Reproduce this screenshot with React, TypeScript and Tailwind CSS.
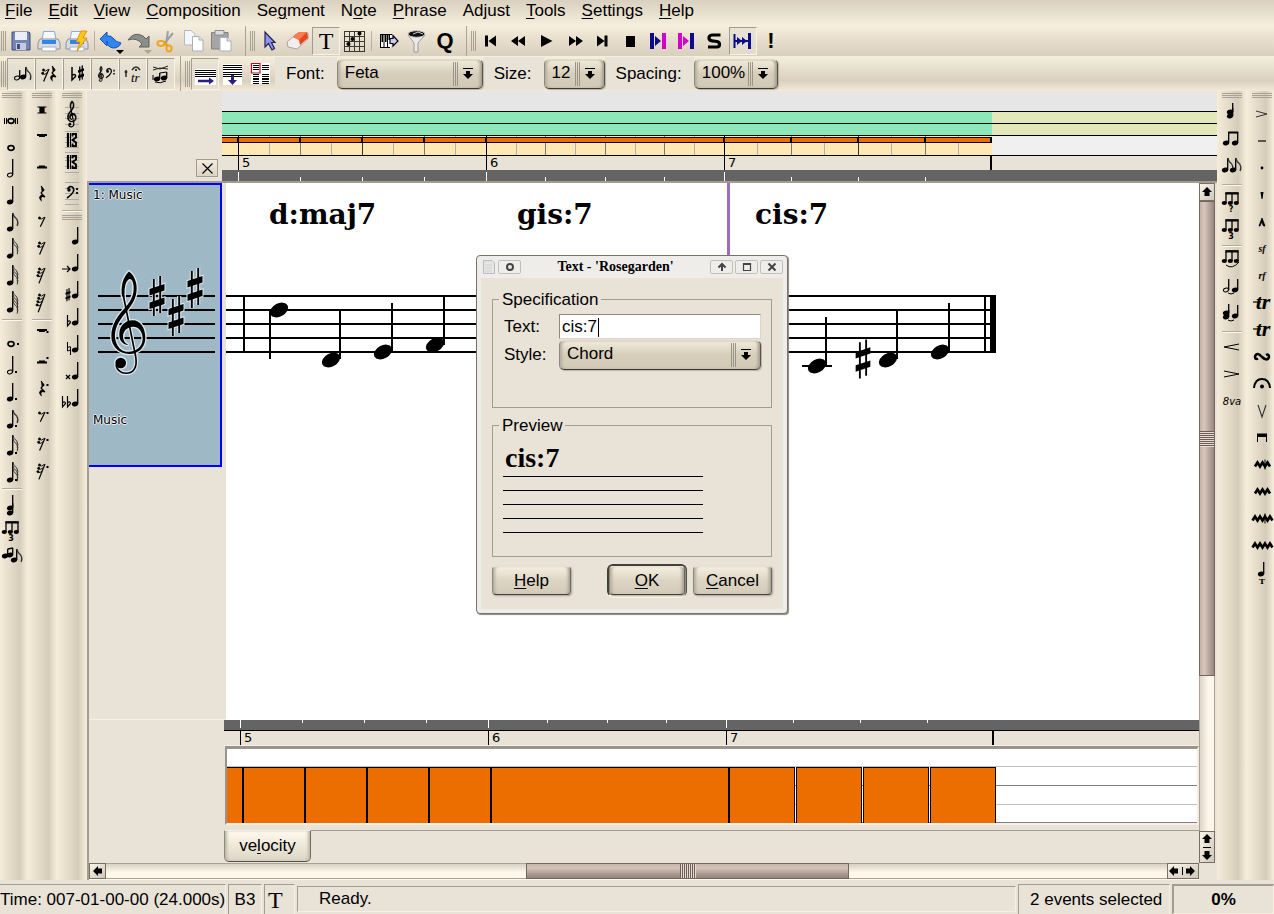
import React from "react";

type Kids = { children?: React.ReactNode };

/* ---------- music glyph primitives ---------- */

const CLEF =
  "M387 545 C408 560 414 590 408 615 C400 650 370 672 355 700 C343 722 342 745 350 762 C358 780 372 788 388 786 C416 784 429 765 428 745 C427 724 415 711 400 711 C382 711 369 724 369 740 C369 752 375 762 386 766 C366 765 357 750 358 732 C359 706 378 692 398 692 C422 692 436 716 436 744 C436 772 416 793 388 793 C356 793 334 770 334 740 C334 705 352 680 372 658 C390 638 402 620 401 592 C400 574 394 566 388 568 C376 574 372 596 374 624 L366 620 C362 590 368 562 387 545Z";
const CLEF_TAIL = "M370 618 L407 800 C413 835 400 851 378 851 C362 851 350 840 348 826";

function Clef({ x, y, s, halo, bold = 0 }: { x: number; y: number; s: number; halo?: boolean; bold?: number }) {
  return (
    <g transform={`translate(${x} ${y}) scale(${s}) translate(-387 -700)`}>
      {halo && (
        <g stroke="#dfe8ec" strokeWidth="8" fill="none">
          <path d={CLEF} />
          <path d={CLEF_TAIL} strokeWidth="12" />
          <circle cx="362" cy="820" r="16" />
        </g>
      )}
      <path d={CLEF} fill="#000" stroke="#000" strokeWidth={bold} />
      <path d={CLEF_TAIL} fill="none" stroke="#000" strokeWidth={5 + bold} />
      <circle cx="362" cy="820" r="16" fill="#000" />
    </g>
  );
}

const SHARP_BARS = "M-7.500 -.5 L7.500 -5.500 V-12 L-7.500 -7 Z M-7.500 13 L7.500 8 V1.500 L-7.500 6.500 Z";

function Sharp({ x, y, s = 1, halo }: { x: number; y: number; s?: number; halo?: boolean }) {
  return (
    <g transform={`translate(${x} ${y}) scale(${s})`}>
      {halo && (
        <g stroke="#dfe8ec" fill="none">
          <path d="M-3.200 -17V20 M3.200 -20V17" strokeWidth="4" />
          <path d={SHARP_BARS} strokeWidth="2" />
        </g>
      )}
      <path d="M-3.200 -17V20 M3.200 -20V17" stroke="#000" strokeWidth="1.900" />
      <path d={SHARP_BARS} fill="#000" />
    </g>
  );
}

function Head({ x, y }: { x: number; y: number }) {
  return <ellipse cx={x} cy={y} rx="9.800" ry="6.600" transform={`rotate(-28 ${x} ${y})`} />;
}

function Note({
  x = 10, y = 21, h = 16, flags = 0, open, dot,
}: { x?: number; y?: number; h?: number; flags?: number; open?: boolean; dot?: boolean }) {
  const sx = x + 2.7;
  return (
    <g>
      <ellipse cx={x} cy={y} rx={open ? 2.6 : 3.2} ry={open ? 1.8 : 2.3} transform={`rotate(-20 ${x} ${y})`} fill={open ? "none" : "#000"} stroke="#000" strokeWidth={open ? 1 : 0} />
      {h > 0 && <path d={`M${sx} ${y}V${y - h}`} stroke="#000" strokeWidth="1.300" />}
      {Array.from({ length: flags }, (_, i) => (
        <path key={i} d={`M${sx} ${y - h + i * 3.2} q1 4 4 6 q2 3 .5 7`} fill="none" stroke="#333" strokeWidth={flags > 1 ? 1 : 1.3} />
      ))}
      {dot && <rect x={x + 5} y={y - 1} width="2" height="2" />}
    </g>
  );
}

function Whole({ x = 11, y = 21, dot, breve }: { x?: number; y?: number; dot?: boolean; breve?: boolean }) {
  return (
    <g stroke="#000" fill="none">
      <ellipse cx={x} cy={y} rx="3" ry="2.300" strokeWidth="1.700" />
      {breve && <path d={`M${x - 6.5} ${y - 3}v6 M${x - 4.5} ${y - 3}v6 M${x + 4.5} ${y - 3}v6 M${x + 6.5} ${y - 3}v6`} />}
      {dot && <rect x={x + 6} y={y - 1} width="2" height="2" fill="#000" stroke="none" />}
    </g>
  );
}

function Triplet({ x = 0, y = 0, mark }: { x?: number; y?: number; mark?: string }) {
  return (
    <g transform={`translate(${x} ${y})`}>
      <path d="M6 13V3H18V13 M12 13V3" fill="none" stroke="#000" strokeWidth="1.300" />
      <path d="M5.500 3.500H18.500" stroke="#000" strokeWidth="2" />
      <ellipse cx="4.300" cy="13" rx="2.600" ry="2" />
      <ellipse cx="10.300" cy="13" rx="2.600" ry="2" />
      <ellipse cx="16.300" cy="13" rx="2.600" ry="2" />
      {mark && (
        <text x="11" y="21.500" textAnchor="middle" className="font-['DejaVu_Sans'] text-[8px] font-bold">
          {mark}
        </text>
      )}
    </g>
  );
}

function Rest({ n, y = 13, dot }: { n: number; y?: number; dot?: boolean }) {
  // n: -3 breve, -2 whole, -1 half, 0 quarter, 1.. eighth and shorter
  return (
    <g transform={`translate(14 ${y})`} stroke="#000" fill="none" strokeWidth="1.200">
      {n === -3 && <path d="M-4.500 -3H4.500 M-4.500 3H4.500 M-2 -3H2V3H-2Z" fill="#000" />}
      {n === -2 && <path d="M-5 -1H5 M-3 0H3" strokeWidth="1.800" />}
      {n === -1 && <path d="M-5 1.500H5 M-3 .3H3" strokeWidth="1.800" />}
      {n === 0 && <path d="M-1 -7L2 -3L-1 0L3 4Q-2 2 -1 7Q-4 4 0 2" fill="#000" strokeWidth="1.100" />}
      {n > 0 && (
        <>
          <path d={`M3 ${-3 - n}L${-1 - n * 0.7} ${4 + n * 1.8}`} />
          {Array.from({ length: n }, (_, i) => (
            <g key={i}>
              <circle cx={-2.500 - i * 0.8} cy={-2 - n + i * 3.300} r="1.200" fill="#000" strokeWidth=".4" />
              <path d={`M${-2.500 - i * 0.8} ${-1.500 - n + i * 3.300}q2 1.500 ${4.500 - i * 0.2} -1`} strokeWidth=".9" />
            </g>
          ))}
        </>
      )}
      {dot && <rect x="4.500" y={n === -2 ? 0 : -4} width="2" height="2" fill="#000" stroke="none" />}
    </g>
  );
}

function StaffBits({ ys }: { ys: number[] }) {
  return (
    <g stroke="#a9abad">
      {ys.map((y) => (
        <path key={y} d={`M7 ${y + 0.5}H21`} />
      ))}
    </g>
  );
}

function CClef({ y }: { y: number }) {
  return (
    <g transform={`translate(9 ${y})`} stroke="#000" fill="none">
      <path d="M1 -7V7" strokeWidth="2.200" />
      <path d="M3.500 -7V7" strokeWidth="1" />
      <path d="M5.500 -3.500V-6H9V-2.500L5.500 0L9 2.500V6H5.500V3.500" strokeWidth="1.900" />
    </g>
  );
}

function FClef({ x = 14, y = 13, s = 1 }: { x?: number; y?: number; s?: number }) {
  return (
    <g transform={`translate(${x} ${y}) scale(${s})`} fill="none" stroke="#000">
      <circle cx="-3" cy="-2" r="1.700" fill="#000" stroke="none" />
      <path d="M-4.500 -3Q-2 -7 1 -4.500Q4 0 -5 6" strokeWidth="1.600" />
      <path d="M5 -4v2M5 0v2" strokeWidth="1.800" />
    </g>
  );
}

const Mordent = ({ n, bar }: { n: number; bar?: boolean }) => (
  <g transform="translate(14.500 13.500)" stroke="#000" fill="none">
    <path
      d={Array.from({ length: n + 1 }, (_, i) => `${i ? "l" : `M${-(n + 1) * 2.5} 2l`}2.500 -4l2.500 4`).join("")}
      strokeWidth="2.600"
    />
    {bar && <path d="M2.500 -5V5" strokeWidth="1" />}
  </g>
);

/* ---------- shared pieces ---------- */

function ToolBtn({ label, children, down }: { label: string; down?: boolean } & Kids) {
  return (
    <button
      type="button"
      aria-label={label}
      title={label}
      className={
        down
          ? "flex h-7 w-7 items-center justify-center border border-t-[#a39c90] border-l-[#a39c90] border-r-[#fbf4e4] border-b-[#fbf4e4] bg-[#e6dfd3]/70"
          : "flex h-7 w-7 items-center justify-center"
      }
    >
      {children}
    </button>
  );
}

function Svg({ children, className = "" }: Kids & { className?: string }) {
  return (
    <svg width="26" height="26" viewBox="0 0 26 26" aria-hidden="true" className={"shrink-0 overflow-visible " + className}>
      {children}
    </svg>
  );
}

function Handle() {
  return (
    <span className="flex h-5 w-[7px] shrink-0 gap-px pl-px">
      <i className="w-px bg-[#a9a294]" />
      <i className="w-px bg-[#a9a294]" />
      <i className="w-px bg-[#a9a294]" />
    </span>
  );
}

function VHandle({ className = "mx-1" }: { className?: string }) {
  return (
    <span className={"flex h-[9px] w-5 shrink-0 flex-col gap-px pt-[2px] " + className}>
      <i className="h-px bg-[#a9a294]" />
      <i className="h-px bg-[#a9a294]" />
      <i className="h-px bg-[#a9a294]" />
    </span>
  );
}

const Split = () => <span className="mr-[3px] ml-[7px] h-full w-px bg-[#aaa396]" />;
const Sep = () => <span className="mx-[3px] h-5 w-px bg-[#b9b2a4]" />;

function VSep({ tall, left }: { tall?: boolean; left?: boolean }) {
  return (
    <span className={tall ? "flex h-2 w-7 shrink-0 flex-col justify-center" : "flex h-[5px] w-7 shrink-0 flex-col justify-center"}>
      <i className={left ? "ml-[2px] h-px w-5 bg-[#b3ac9f]" : "mx-1 h-px bg-[#b3ac9f]"} />
      <i className={left ? "ml-[2px] h-px w-5 bg-[#fdf7e9]" : "mx-1 h-px bg-[#fdf7e9]"} />
    </span>
  );
}

function Cell({ label, children }: { label: string } & Kids) {
  return (
    <button type="button" aria-label={label} title={label} className="block h-[27px] shrink-0">
      <svg width="28" height="27" viewBox="0 0 28 27" aria-hidden="true" className="block overflow-visible">
        {children}
      </svg>
    </button>
  );
}

const DownMark = () => (
  <svg width="10" height="12" viewBox="0 0 10 12" aria-hidden="true">
    <path d="M0 .5H10" stroke="#000" />
    <path d="M3 3H7V6H10L5 11L0 6H3Z" fill="#000" />
  </svg>
);

function Combo({ id, value, width, options }: { id: string; value: string; width: string; options: string[] }) {
  return (
    <span className={"relative block h-[30px] " + width}>
      <select
        id={id}
        defaultValue={value}
        className="block h-[30px] w-full appearance-none rounded-[5px] border border-t-[#e2dac8] border-r-[#55524a] border-b-[#3d3b35] border-l-[#8e887b] bg-linear-to-b from-[#f3ecdc] via-[#d6cdba] to-[#d2cab7] pb-[2px] pl-[7px] text-[17px] leading-6 shadow-[inset_3px_0_3px_-1px_#b5ad9d,inset_-3px_0_3px_-1px_#a39c8d,1px_1px_1px_#b9b2a5] outline-none"
      >
        {options.map((o) => (
          <option key={o}>{o}</option>
        ))}
      </select>
      <span className="pointer-events-none absolute inset-y-0 right-[10px] flex items-center gap-[5px]">
        <span className="flex h-6 gap-px">
          <i className="w-px bg-[#9c9587]" />
          <i className="w-px bg-[#9c9587]" />
          <i className="w-px bg-[#9c9587]" />
        </span>
        <DownMark />
      </span>
    </span>
  );
}

function PushButton({ children, width }: { width: string } & Kids) {
  return (
    <button
      type="button"
      className={
        "h-[29px] rounded-[4px] border border-t-[#e9e2d2] border-r-[#6e6a60] border-b-[#45433d] border-l-[#8f897c] bg-linear-to-b from-[#f5eedf] via-[#ddd5c4] to-[#d3cab7] text-[17px] leading-6 shadow-[inset_4px_0_3px_-2px_#b5ad9d,inset_-4px_0_3px_-2px_#a8a192,1px_1px_2px_#a8a295] " +
        width
      }
    >
      {children}
    </button>
  );
}

const U = ({ children }: Kids) => <span className="underline decoration-1 underline-offset-2">{children}</span>;

/* ---------- menu and toolbars ---------- */

const MENU: [string, string, string][] = [
  ["", "F", "ile"], ["", "E", "dit"], ["", "V", "iew"], ["", "C", "omposition"], ["Se", "g", "ment"],
  ["N", "o", "te"], ["", "P", "hrase"], ["Ad", "j", "ust"], ["", "T", "ools"], ["", "S", "ettings"], ["", "H", "elp"],
];

function MenuBar() {
  return (
    <nav className="flex h-[26px] gap-4 bg-linear-to-b from-[#d9d0bf] to-[#f7efdd] pl-[5px] text-[17px] leading-[22px]">
      {MENU.map(([a, b, c]) => (
        <button key={a + b + c} type="button" className="h-[22px]">
          {a}
          <U>{b}</U>
          {c}
        </button>
      ))}
    </nav>
  );
}

const Printer = () => (
  <g>
    <path d="M7.500 3.500H18.500L20 12H6Z" fill="#f4f8ff" stroke="#8fa9d8" />
    <path d="M4 11H22L24 15V21H2V15Z" fill="#d8dce2" stroke="#8a929c" />
    <path d="M6 12H20V16H6Z" fill="#2f86e8" />
    <path d="M6 19H20V23H6Z" fill="#fff" stroke="#a9b1ba" />
  </g>
);

function MainToolbar() {
  return (
    <div className="flex h-[30px] items-center bg-linear-to-b from-[#f6eedb] via-[#e9e0cf] via-40% to-[#d8cfbe]">
      <Handle />
      <ToolBtn label="Save">
        <Svg>
          <path d="M4 4H21L22 5V22H4Z" fill="#7486b4" stroke="#3f4f7e" />
          <path d="M7 4H19V12H7Z" fill="#e9eef8" />
          <path d="M8 15H18V22H8Z" fill="#c4cbe0" />
          <path d="M9 16H12V21H9Z" fill="#3f4f7e" />
        </Svg>
      </ToolBtn>
      <ToolBtn label="Print"><Svg><Printer /></Svg></ToolBtn>
      <ToolBtn label="Print preview">
        <Svg>
          <Printer />
          <path d="M17 3L12 14H16L13 23L23 10H19L23 3Z" fill="#ffc61a" stroke="#d48a00" strokeWidth=".8" />
        </Svg>
      </ToolBtn>
      <Sep />
      <ToolBtn label="Undo">
        <Svg>
          <path d="M1 11L8 4V8Q12 7 15 11Q17 14 22 15Q20 20 14 20Q8 19 8 13V18Z" fill="#2f86f0" stroke="#1c4fb0" />
          <path d="M17 22H25L21 26Z" fill="#000" />
        </Svg>
      </ToolBtn>
      <ToolBtn label="Redo">
        <Svg>
          <path d="M1 12Q7 3 16 8L19 11L22 8V19H12L15 16Q10 9 1 12Z" fill="#8b8f8c" stroke="#5d615e" />
          <path d="M17 22H25L21 26Z" fill="#aaa396" />
        </Svg>
      </ToolBtn>
      <ToolBtn label="Cut">
        <Svg>
          <path d="M13 3L11 16M18 5L9 16" stroke="#9aa0a8" strokeWidth="2" />
          <path d="M9 15L13 18" stroke="#e59a10" strokeWidth="2.500" />
          <ellipse cx="6" cy="15.500" rx="3.600" ry="2.400" fill="none" stroke="#f0a61c" strokeWidth="2" />
          <ellipse cx="14" cy="20.500" rx="2.600" ry="3" fill="none" stroke="#f0a61c" strokeWidth="2" />
        </Svg>
      </ToolBtn>
      <ToolBtn label="Copy">
        <Svg>
          <path d="M1.500 2.500H8L12 6V17H1.500Z" fill="#f5f7fb" stroke="#b3b9c6" />
          <path d="M9.500 8.500H16L20 12V23H9.500Z" fill="#fff" stroke="#a7aebd" />
          <path d="M16 8.500V12H20" fill="#dfe4ee" stroke="#a7aebd" />
        </Svg>
      </ToolBtn>
      <ToolBtn label="Paste">
        <Svg>
          <path d="M.5 4.500H17V21H.5Z" fill="#a4a7a6" stroke="#7f8281" />
          <path d="M4 2.500H13V7H4Z" fill="#dcdedd" stroke="#8b8e8d" />
          <path d="M9 9.500H16L20 13V23H9Z" fill="#fff" stroke="#a7aebd" />
          <path d="M16 9.500V13H20" fill="#dfe4ee" stroke="#a7aebd" />
        </Svg>
      </ToolBtn>
      <Split />
      <Handle />
      <ToolBtn label="Select">
        <Svg><path d="M8 4V19L11.500 15.500L15 22L17.500 20.500L14.500 14.500H18Z" fill="#8f93ea" stroke="#22225a" strokeWidth="1.200" /></Svg>
      </ToolBtn>
      <ToolBtn label="Erase">
        <Svg>
          <path d="M2 14L11 6L23 5L23 11L12 21L3 19Z" fill="#f3eeee" stroke="#9b9392" strokeWidth=".8" />
          <path d="M8 9L14 4H22L23 10L15 17L14 12Z" fill="#e8451a" />
          <path d="M8 9L14 4H22L14 12Z" fill="#ff7c50" />
        </Svg>
      </ToolBtn>
      <ToolBtn label="Text" down><span className="font-['Liberation_Serif'] text-[24px] leading-6">T</span></ToolBtn>
      <ToolBtn label="Guitar chord">
        <Svg>
          <path d="M3.500 3V24M8.500 3V24M13.500 3V24M18.500 3V24M23.500 3V24M3 3.500H24M3 8.500H24M3 13.500H24M3 18.500H24M3 23.500H24" stroke="#3a3832" />
          <circle cx="18.500" cy="5.500" r="2" /><circle cx="11.500" cy="11" r="2" /><circle cx="7.500" cy="16" r="2" />
        </Svg>
      </ToolBtn>
      <Sep />
      <ToolBtn label="Step recording">
        <Svg>
          <path d="M4 6H15V20H4Z" fill="#fff" />
          <path d="M4.500 6V20M8 6V20M11.500 6V20M4 6.500H16M4 19.500H14" stroke="#000" />
          <path d="M5.500 6h1.500v8h-1.500zM9 6h1.500v8h-1.500zM12.500 6h1.500v6h-1.500z" />
          <path d="M14 10.500H17V7.500L22 13L17 18V15.500H14Z" fill="#c9caf5" stroke="#000" strokeWidth="1.200" />
        </Svg>
      </ToolBtn>
      <ToolBtn label="Filter">
        <Svg>
          <path d="M4 7L10 15V24H14V15L21 7Z" fill="#e9e9e7" stroke="#8a8a88" strokeWidth=".8" />
          <ellipse cx="12.500" cy="6" rx="8.500" ry="3.300" fill="#111" stroke="#ccc" />
          <path d="M9 6L14 4L19 6" stroke="#fff" strokeWidth=".8" fill="none" />
        </Svg>
      </ToolBtn>
      <ToolBtn label="Quantize"><span className="text-[22px] leading-6 font-bold">Q</span></ToolBtn>
      <Split />
      <Handle />
      <ToolBtn label="Rewind to start"><Svg><path d="M7 7.500H10V18.500H7ZM18 7.500V18.500L10.500 13Z" /></Svg></ToolBtn>
      <ToolBtn label="Rewind"><Svg><path d="M12 8V18L5 13ZM19 8V18L12 13Z" /></Svg></ToolBtn>
      <ToolBtn label="Play"><Svg><path d="M7 7V19L18.500 13Z" /></Svg></ToolBtn>
      <ToolBtn label="Fast forward"><Svg><path d="M7 8V18L14 13ZM14 8V18L21 13Z" /></Svg></ToolBtn>
      <ToolBtn label="Forward to end"><Svg><path d="M7 7.500V18.500L14.500 13ZM14.500 7.500H17.500V18.500H14.500Z" /></Svg></ToolBtn>
      <ToolBtn label="Stop"><Svg><path d="M8 8H17V19H8Z" /></Svg></ToolBtn>
      <ToolBtn label="Playback pointer to start">
        <Svg>
          <path d="M4 5H8V21H4ZM9 8V18L15 13Z" fill="#0b0b8c" />
          <path d="M16 5H20V21H16Z" fill="#d400c8" />
        </Svg>
      </ToolBtn>
      <ToolBtn label="Playback pointer to end">
        <Svg>
          <path d="M4 5H8V21H4ZM9 8V18L15 13Z" fill="#d400c8" />
          <path d="M16 5H20V21H16Z" fill="#0b0b8c" />
        </Svg>
      </ToolBtn>
      <ToolBtn label="Solo">
        <Svg><path d="M18.500 7H11Q7 7 7 10Q7 12.500 10 12.800L15 13.500Q17.500 14 17.500 16.500Q17.500 19 15 19H6" fill="none" stroke="#000" strokeWidth="3.200" /></Svg>
      </ToolBtn>
      <ToolBtn label="Scroll to follow playback" down>
        <Svg>
          <path d="M4.500 6V20M4 13H18" stroke="#0b0b8c" strokeWidth="2" />
          <path d="M7 9L12 13L7 17ZM12 9L17 13L12 17Z" fill="#0b0b8c" />
          <path d="M18 5H21V21H18Z" fill="#0b0b8c" />
        </Svg>
      </ToolBtn>
      <ToolBtn label="Panic"><span className="text-[22px] leading-6 font-bold">!</span></ToolBtn>
    </div>
  );
}

function Field({ id, label, children }: { id: string; label: string } & Kids) {
  return (
    <span className="flex h-[33px] items-center">
      <label htmlFor={id} className="flex h-[33px] items-center bg-[#e8e2d7] pr-3 pl-[11px] text-[17px] leading-6">
        {label}
      </label>
      {children}
    </span>
  );
}

const MiniStaff = ({ y = 0, x = 0, w = 22 }: { y?: number; x?: number; w?: number }) => (
  <g stroke="#000">
    {[0, 2, 4].map((d) => (
      <path key={d} d={`M${x} ${y + d + 0.5}h${w}`} />
    ))}
  </g>
);

function NoteToolbar() {
  const tall = "flex h-8 items-center [&>button]:h-8";
  return (
    <div className="flex h-[35px] items-center bg-linear-to-b from-[#f7efdd] via-[#d9d0bf] via-70% to-[#f3ead7]">
      <span className="flex h-8 py-[3px] [&>span]:h-full">
        <Handle />
      </span>
      <div className={tall}>
        <ToolBtn label="Notes" down><Svg><Note x={9} y={17} h={8} open /><Note x={15} y={16} h={10} flags={1} /></Svg></ToolBtn>
        <ToolBtn label="Rests" down><Svg><g transform="translate(-4 0)"><Rest n={2} /></g><g transform="translate(3 -1)"><Rest n={0} /></g></Svg></ToolBtn>
        <ToolBtn label="Accidentals" down>
          <Svg>
            <path d="M8 6V19L11.500 15.500Q12 12.500 8 14" fill="none" stroke="#000" strokeWidth="1.500" />
            <Sharp x={17} y={12} s={0.4} /><path d="M15.800 6V19M18.200 5V18" stroke="#000" />
          </Svg>
        </ToolBtn>
        <ToolBtn label="Clefs" down>
          <Svg>
            <Clef x={9} y={13} s={0.05} bold={12} />
            <FClef x={18} y={12} s={0.8} />
          </Svg>
        </ToolBtn>
        <ToolBtn label="Marks" down>
          <Svg>
            <path d="M6 9V16M4.500 11H7.500" stroke="#000" strokeWidth="1.200" />
            <path d="M12 9Q16 3 20 9" fill="none" stroke="#333" strokeWidth="1.500" />
            <circle cx="16" cy="9" r="1" />
            <text x="11" y="21" className="font-['Liberation_Serif'] text-[13px] italic">tr</text>
          </Svg>
        </ToolBtn>
        <ToolBtn label="Group" down>
          <Svg>
            <path d="M5 6L12 8L20 5M5 9L12 7L20 8" fill="none" stroke="#222" />
            <Note x={9} y={18} h={6} /><Note x={16} y={17} h={6} />
            <path d="M11.700 12L18.700 11M7 21Q12 23 18 20M5 14V19" fill="none" stroke="#000" />
          </Svg>
        </ToolBtn>
      </div>
      <span className="flex h-[35px] pl-[5px]"><i className="mr-[3px] w-px bg-[#aaa396]" /></span>
      <span className="flex h-8 py-[3px] [&>span]:h-full"><Handle /></span>
      <div className={tall}>
        <ToolBtn label="Linear layout" down>
          <Svg>
            <path d="M3 8H24V24H3Z" fill="#fff" />
            <MiniStaff y={9} x={3} w={21} /><path d="M3 15.500H24" stroke="#000" />
            <path d="M6 20H18" stroke="#2a2080" strokeWidth="2.500" />
            <path d="M17 16.500L22 20L17 23.500Z" fill="#2a2080" />
          </Svg>
        </ToolBtn>
        <ToolBtn label="Page layout">
          <Svg>
            <path d="M3 3H22V24H3Z" fill="#fff" />
            <MiniStaff y={4} x={3} w={19} /><MiniStaff y={11} x={3} w={19} />
            <path d="M12.500 14V20" stroke="#2a2080" strokeWidth="3" />
            <path d="M8 19H17L12.500 24Z" fill="#2a2080" />
          </Svg>
        </ToolBtn>
        <ToolBtn label="Multi page layout">
          <Svg>
            <path d="M3 2H22V23H3Z" fill="#fff" />
            <MiniStaff y={4} x={5} w={6} /><MiniStaff y={4} x={14} w={7} />
            <MiniStaff y={13} x={5} w={6} /><MiniStaff y={13} x={14} w={7} />
            <MiniStaff y={18} x={5} w={6} /><MiniStaff y={18} x={14} w={7} />
            <path d="M3.500 2.500H12V12H3.500Z" fill="none" stroke="#b01020" strokeWidth="1.200" />
          </Svg>
        </ToolBtn>
      </div>
      <Field id="font" label="Font:"><Combo id="font" value="Feta" width="w-[146px]" options={["Feta"]} /></Field>
      <Field id="size" label="Size:"><Combo id="size" value="12" width="w-[61px]" options={["12"]} /></Field>
      <Field id="spacing" label="Spacing:"><Combo id="spacing" value="100%" width="w-[84px]" options={["100%"]} /></Field>
    </div>
  );
}

/* ---------- side palettes ---------- */

const col = "flex flex-col items-start bg-linear-to-r from-[#f5edd9] via-[#d5ccba] via-70% to-[#f7efdc]";

function LeftTools() {
  return (
    <aside className="flex shrink-0">
      <div className={col + " w-7"}>
        <VHandle className="ml-[2px]" />
        <Cell label="Breve"><Whole breve /></Cell>
        <Cell label="Whole"><Whole /></Cell>
        <Cell label="Half"><Note open /></Cell>
        <Cell label="Quarter"><Note /></Cell>
        <Cell label="Eighth"><Note flags={1} /></Cell>
        <Cell label="Sixteenth"><Note h={18} flags={2} /></Cell>
        <Cell label="Thirty-second"><Note h={18} flags={3} /></Cell>
        <Cell label="Sixty-fourth"><Note h={19} flags={4} /></Cell>
        <VSep tall left />
        <Cell label="Dotted whole"><Whole y={20} dot /></Cell>
        <Cell label="Dotted half"><Note open dot /></Cell>
        <Cell label="Dotted quarter"><Note dot /></Cell>
        <Cell label="Dotted eighth"><Note flags={1} dot /></Cell>
        <Cell label="Dotted sixteenth"><Note h={18} flags={2} dot /></Cell>
        <Cell label="Dotted thirty-second"><Note h={18} flags={3} dot /></Cell>
        <VSep left />
        <Cell label="Chord mode"><Note y={22} h={18} /><Note y={17} h={5} /></Cell>
        <Cell label="Triplet mode"><Triplet y={1} mark="3" /></Cell>
        <Cell label="Grace mode">
          <Note x={5} y={11} h={7} /><Note x={10} y={10} h={7} /><path d="M7.700 4L13 3" stroke="#000" strokeWidth="1.500" /><Note x={14} y={15} h={11} flags={1} />
        </Cell>
      </div>
      <div className={col + " w-[29px]"}>
        <VHandle />
        <Cell label="Breve rest"><Rest n={-3} y={10} /></Cell>
        <Cell label="Whole rest"><Rest n={-2} y={9} /></Cell>
        <Cell label="Half rest"><Rest n={-1} y={12} /></Cell>
        <Cell label="Quarter rest"><Rest n={0} y={12} /></Cell>
        <Cell label="Eighth rest"><Rest n={1} /></Cell>
        <Cell label="Sixteenth rest"><Rest n={2} y={12} /></Cell>
        <Cell label="Thirty-second rest"><Rest n={3} y={12} /></Cell>
        <Cell label="Sixty-fourth rest"><Rest n={4} y={12} /></Cell>
        <VSep tall />
        <Cell label="Dotted whole rest"><Rest n={-2} y={7} dot /></Cell>
        <Cell label="Dotted half rest"><Rest n={-1} y={10} dot /></Cell>
        <Cell label="Dotted quarter rest"><Rest n={0} y={10} dot /></Cell>
        <Cell label="Dotted eighth rest"><Rest n={1} y={11} dot /></Cell>
        <Cell label="Dotted sixteenth rest"><Rest n={2} y={11} dot /></Cell>
        <Cell label="Dotted thirty-second rest"><Rest n={3} y={11} dot /></Cell>
      </div>
      <div className={col + " w-[30px] pl-px"}>
        <VHandle />
        <Cell label="Treble clef"><StaffBits ys={[7, 13, 18, 24]} /><Clef x={14} y={14} s={0.085} bold={9} /></Cell>
        <Cell label="Alto clef"><StaffBits ys={[4, 10, 15, 20, 25]} /><CClef y={13} /></Cell>
        <Cell label="Tenor clef"><StaffBits ys={[3, 6, 12, 18]} /><CClef y={8} /></Cell>
        <Cell label="Bass clef"><StaffBits ys={[1, 7, 12, 18, 23]} /><FClef y={11} /></Cell>
        <VSep />
        <VHandle />
        <Cell label="No accidental"><Note x={17} y={20} h={15} /></Cell>
        <Cell label="Follow accidental"><Note x={17} y={20} h={15} /><path d="M4 20H12M9 17L12 20L9 23" fill="none" stroke="#000" strokeWidth="1.200" /></Cell>
        <Cell label="Sharp"><Note x={17} y={20} h={15} /><Sharp x={10} y={19} s={0.33} /><path d="M9 13V25M11 12V24" stroke="#000" strokeWidth=".8" /></Cell>
        <Cell label="Flat"><Note x={17} y={20} h={15} /><path d="M9.500 12V23L12.500 19.500Q12.500 17 9.500 18.500" fill="none" stroke="#000" strokeWidth="1.200" /></Cell>
        <Cell label="Natural"><Note x={17} y={20} h={15} /><path d="M9.500 12V21L12.500 20V25M12.500 17V25M9.500 17.500L12.500 16.500" fill="none" stroke="#000" /></Cell>
        <Cell label="Double sharp"><Note x={17} y={20} h={15} /><path d="M8 18L12 22M12 18L8 22" stroke="#000" strokeWidth="1.300" /></Cell>
        <Cell label="Double flat"><Note x={17} y={20} h={15} /><path d="M4.500 12V23L7.500 19.500Q7.500 17 4.500 18.500M9.500 12V23L12.500 19.500Q12.500 17 9.500 18.500" fill="none" stroke="#000" strokeWidth="1.200" /></Cell>
      </div>
    </aside>
  );
}

function Trill() {
  return (
    <g>
      <text x="15" y="20" textAnchor="middle" className="font-['Liberation_Serif'] text-[22px] font-bold italic">tr</text>
      <path d="M5 13H13" stroke="#000" strokeWidth="1.200" />
    </g>
  );
}

function RightTools() {
  return (
    <aside className="flex shrink-0">
      <div className={col + " w-[30px] pl-px"}>
        <VHandle />
        <Cell label="Chord"><Note x={12} y={16} h={13} /><Note x={12} y={12} h={4} /></Cell>
        <Cell label="Beam"><Note x={8} y={16} h={11} /><Note x={17} y={16} h={11} /><path d="M10.200 5.500H20.200" stroke="#000" strokeWidth="2" /></Cell>
        <Cell label="Auto beam"><Note x={7} y={16} h={12} flags={1} /><Note x={15} y={16} h={12} flags={1} /></Cell>
        <VSep tall />
        <Cell label="Tuplet"><Triplet x={2} y={1} mark="?" /></Cell>
        <Cell label="Triplet"><Triplet x={2} y={1} mark="3" /></Cell>
        <VSep />
        <Cell label="Slur"><Triplet x={2} /><path d="M8 17Q14 22 21 14" fill="none" stroke="#000" /></Cell>
        <Cell label="Tie"><Note x={8} y={15} h={11} open /><Note x={17} y={15} h={11} /><path d="M10 18Q13 20 16 18" fill="none" stroke="#000" /></Cell>
        <Cell label="Tie chord"><Note x={8} y={15} h={13} /><Note x={8} y={11} h={3} /><Note x={17} y={14} h={11} /><path d="M10 18Q13 20 16 18" fill="none" stroke="#000" /></Cell>
        <VSep />
        <Cell label="Crescendo"><path d="M21 10L6 13L21 16" fill="none" stroke="#000" /></Cell>
        <Cell label="Decrescendo"><path d="M6 10L21 13L6 16" fill="none" stroke="#000" /></Cell>
        <Cell label="Octave up"><text x="14" y="17" textAnchor="middle" className="font-['DejaVu_Sans'] text-[10px] italic">8va</text></Cell>
      </div>
      <div className={col + " w-[27px] pl-px"}>
        <VHandle />
        <Cell label="Accent"><path d="M8 11L19 14L8 17" fill="none" stroke="#333" /></Cell>
        <Cell label="Tenuto"><path d="M10 14H18" stroke="#222" strokeWidth="1.400" /></Cell>
        <Cell label="Staccato"><circle cx="14" cy="14" r="1.400" /></Cell>
        <Cell label="Staccatissimo"><path d="M12.500 11H15.500L14.500 18H13.500Z" /></Cell>
        <Cell label="Marcato"><path d="M11 18L14 10L17 18L15.500 18L13.500 14L12 18Z" stroke="#000" strokeWidth=".8" /></Cell>
        <Cell label="Sforzando"><text x="14" y="17" textAnchor="middle" className="font-['Liberation_Serif'] text-[10px] font-bold italic">sf</text></Cell>
        <Cell label="Rinforzando"><text x="14" y="17" textAnchor="middle" className="font-['Liberation_Serif'] text-[10px] font-bold italic">rf</text></Cell>
        <Cell label="Trill"><Trill /></Cell>
        <Cell label="Trill with line"><Trill /></Cell>
        <Cell label="Turn"><path d="M10 15.500Q7 17 7 13.500Q9 8.500 13.500 13.500Q19 19 21 14Q21 10.500 18 12" fill="none" stroke="#000" strokeWidth="2.500" /></Cell>
        <Cell label="Fermata"><path d="M6 18Q7 9 14 9Q21 9 22 18" fill="none" stroke="#000" strokeWidth="2" /><circle cx="14" cy="16.500" r="2" /></Cell>
        <Cell label="Up bow"><path d="M10 8L14 20L18 8" fill="none" stroke="#333" strokeWidth="1.100" /></Cell>
        <Cell label="Down bow"><path d="M9.500 18V11M18.500 18V11" stroke="#000" /><path d="M9 9.500H19V13H9Z" /></Cell>
        <Cell label="Mordent"><Mordent n={2} bar /></Cell>
        <Cell label="Inverted mordent"><Mordent n={2} /></Cell>
        <Cell label="Long mordent"><Mordent n={3} bar /></Cell>
        <Cell label="Long inverted mordent"><Mordent n={3} /></Cell>
        <Cell label="Text mark">
          <Note x={13} y={15} h={12} />
          <text x="14" y="25" textAnchor="middle" className="font-['DejaVu_Serif'] text-[8px] font-bold">T</text>
        </Cell>
      </div>
    </aside>
  );
}

/* ---------- rulers, score, velocity ---------- */

const BEATS = [16, 78, 140, 202, 264, 323, 383, 442, 502, 569, 636, 703];
const HALVES = [47, 109, 171, 233, 294, 353, 413, 472, 535, 602, 669, 736];
const SEGS = [-46, 16, 78, 140, 202, 264, 502, 569, 636, 703, 769];
const BARS: [number, string][] = [[16, "5"], [264, "6"], [502, "7"]];

function TopRuler() {
  return (
    <svg height="90" className="block min-w-0 flex-1" shapeRendering="crispEdges" role="img" aria-label="Chord, tempo and segment rulers">
      <rect width="100%" height="21" fill="#e6e6e6" />
      <rect y="21" width="100%" height="24" fill="#e2e8ba" />
      <rect y="21" width="770" height="24" fill="#8ce8b8" />
      <rect y="45" width="100%" height="20" fill="#f0f0f0" />
      <rect y="45" width="770" height="20" fill="#ffe8b4" />
      <rect y="65" width="100%" height="14" fill="#e8e2d7" />
      {HALVES.map((x) => <rect key={x} x={x} y="45" width="1" height="20" fill="#b4b0aa" />)}
      {BEATS.map((x) => <rect key={x} x={x} y="45" width="1" height="20" fill={x === 140 || x === 636 ? "#333" : "#777"} />)}
      {[20, 32, 44, 64].map((y) => <rect key={y} y={y} width="100%" height="1" />)}
      <rect y="46" width="770" height="6" />
      {SEGS.slice(0, -1).map((x, i) => <rect key={x} x={x + 1} y="47" width={SEGS[i + 1] - x - 2} height="4" fill="#ec6e00" />)}
      <rect y="79" width="100%" height="11" fill="#646464" />
      {BEATS.map((x) => <rect key={x} x={x} y="86" width="1" height="4" fill="#fff" />)}
      {BARS.map(([x, t]) => (
        <g key={t}>
          <rect x={x} y="45" width="1" height="34" />
          <rect x={x} y="81" width="1" height="9" fill="#fff" />
          <text x={x + 4} y="76" className="font-['DejaVu_Sans'] text-[13px]">{t}</text>
        </g>
      ))}
      <rect x="768" y="65" width="2" height="14" />
    </svg>
  );
}

function BottomRuler() {
  return (
    <svg height="26" className="ml-[2px] block min-w-0 flex-1" shapeRendering="crispEdges" role="img" aria-label="Bar ruler">
      <rect width="100%" height="10" fill="#646464" />
      <rect y="10" width="100%" height="1" />
      {BEATS.map((x) => <rect key={x} x={x} width="1" height="3" fill="#fff" />)}
      {BARS.map(([x, t]) => (
        <g key={t}>
          <rect x={x} width="1" height="8" fill="#fff" />
          <rect x={x} y="11" width="1" height="14" />
          <text x={x + 4} y="22" className="font-['DejaVu_Sans'] text-[13px]">{t}</text>
        </g>
      ))}
      <rect x="768" y="11" width="2" height="14" />
      <rect y="25" width="100%" height="1" fill="#f7efe1" />
    </svg>
  );
}

const STAFF = [112, 126, 140, 154, 168];
const NOTES: [number, number, number, number, number][] = [
  [53, 127, 44, 127, 176],
  [105, 177, 114, 127, 176],
  [157, 169, 166, 120, 168],
  [209, 162, 218, 113, 162],
  [591, 183, 600, 134, 182],
  [662, 177, 671, 127, 176],
  [714, 169, 723, 120, 168],
];

function Score() {
  return (
    <svg className="ml-1 block min-w-0 flex-1 bg-white" role="img" aria-label="Score">
      {STAFF.map((y) => <rect key={y} y={y} width="770" height="2" shapeRendering="crispEdges" />)}
      <rect x="17" y="112" width="2" height="58" />
      <rect x="758" y="112" width="2" height="58" />
      <rect x="764" y="112" width="6" height="58" />
      <rect x="576" y="182" width="30" height="2" />
      {NOTES.map(([x, y, sx, a, b]) => (
        <g key={x}>
          <Head x={x} y={y} />
          <rect x={sx - 1} y={a} width="2" height={b - a} />
        </g>
      ))}
      <Sharp x={637} y={176} s={0.98} />
      <rect x="501" width="3" height="300" fill="#a06cba" />
      <g className="font-['DejaVu_Serif'] text-[28px] font-bold">
        <text x="43" y="41">d:maj7</text>
        <text x="291" y="41">gis:7</text>
        <text x="529" y="41">cis:7</text>
      </g>
    </svg>
  );
}

const haloText = "font-['DejaVu_Sans'] text-[12px] leading-4 [text-shadow:1px_0_#e8eef2,-1px_0_#e8eef2,0_1px_#e8eef2,0_-1px_#e8eef2]";

function StaffHeader() {
  return (
    <div className="w-[133px] shrink-0">
      <div className="flex h-[284px] flex-col border-t-2 border-r-2 border-b-2 border-[#0000ff] bg-[#9fb8c6] pl-1">
        <span className={"pt-[2px] " + haloText}>1: Music</span>
        <svg height="201" className="block w-full overflow-visible" role="img" aria-label="Treble clef, key signature of three sharps">
          {[92, 106, 120, 134, 148].map((y) => <rect key={y} x="5" y={y} width="117" height="2" shapeRendering="crispEdges" />)}
          <Clef x={36} y={120} s={0.333} halo />
          <Sharp x={64} y={93} halo />
          <Sharp x={83} y={113} halo />
          <Sharp x={102} y={85} halo />
        </svg>
        <span className={"pt-[8px] " + haloText}>Music</span>
      </div>
    </div>
  );
}

const VEL: [number, number][] = [
  [-10, 16], [16, 78], [78, 140], [140, 202], [202, 264], [264, 502], [502, 568], [569, 635], [636, 702], [703, 769],
];

function Velocity() {
  return (
    <div className="ml-[3px] flex min-w-0 flex-1 border-t-[3px] border-r-2 border-b-2 border-l-2 border-t-[#99958d] border-r-[#f4ecdf] border-b-[#f7efe1] border-l-[#99958d]">
      <svg height="74" className="block min-w-0 flex-1 bg-white" shapeRendering="crispEdges" role="img" aria-label="Velocity">
        <rect y="17" width="100%" height="1" fill="#c0c0c0" />
        <rect y="36" width="100%" height="1" fill="#808080" />
        <rect y="55" width="100%" height="1" fill="#c0c0c0" />
        <rect y="73" width="100%" height="1" fill="#808080" />
        {VEL.map(([a, b]) => (
          <g key={a}>
            <rect x={a} y="18" width={b - a} height="56" />
            <rect x={a + 1} y="19" width={b - a - 2} height="55" fill="#ec6e00" />
          </g>
        ))}
      </svg>
    </div>
  );
}

/* ---------- scroll bars ---------- */

const arrowBtn = "flex shrink-0 items-center justify-center gap-[3px] border border-[#756f66] bg-linear-to-br from-[#fbf5e8] to-[#cfc7b8]";

function Arrow({ dir }: { dir: "up" | "down" | "left" | "right" }) {
  const d = {
    up: "M5 0L10 5H7.500V9H2.500V5H0Z",
    down: "M5 9L10 4H7.500V0H2.500V4H0Z",
    left: "M0 5L5 0V2.500H9V7.500H5V10Z",
    right: "M9 5L4 0V2.500H0V7.500H4V10Z",
  }[dir];
  return (
    <svg width="10" height="10" viewBox="0 0 10 10" aria-hidden="true" className="shrink-0"><path d={d} /></svg>
  );
}

function VScroll() {
  return (
    <div className="mr-[2px] flex w-4 shrink-0 flex-col bg-[#fff7ea]">
      <button type="button" aria-label="Scroll up" className={arrowBtn + " h-[18px]"}><Arrow dir="up" /></button>
      <div className="flex grow-475 basis-0 flex-col items-center justify-center border border-[#756661] bg-linear-to-r from-[#c3b1a8] via-[#d8c7bd] via-30% to-[#9a8880]">
        <span className="flex h-4 w-full flex-col gap-px">
          {Array.from({ length: 8 }, (_, i) => <i key={i} className="h-px bg-[#6e5f59] shadow-[0_1px_#e5d9d2]" />)}
        </span>
      </div>
      <div className="grow-155 basis-0 border-x border-[#a9a295] bg-linear-to-r from-[#ddd6c8] to-[#fff7ea] to-60%" />
      <button type="button" aria-label="Scroll by step" className={arrowBtn + " h-8 flex-col"}>
        <Arrow dir="up" />
        <i className="h-px w-2 shrink-0 bg-black" />
        <Arrow dir="down" />
      </button>
    </div>
  );
}

function HScroll() {
  return (
    <div className="mr-[18px] flex h-[17px] bg-[#fff7ea] pb-px">
      <button type="button" aria-label="Scroll left" className={arrowBtn + " w-[17px]"}><Arrow dir="left" /></button>
      <div className="grow-422 basis-0 border-y border-[#a9a295] bg-linear-to-b from-[#d8d0c1] to-[#fff7ea] to-60%" />
      <div className="flex grow-322 basis-0 items-center justify-center border border-[#756661] bg-linear-to-b from-[#c8b6ad] via-[#d3c2b8] via-30% to-[#93817a]">
        <span className="flex h-full w-4 gap-px">
          {Array.from({ length: 8 }, (_, i) => <i key={i} className="w-px bg-[#6e5f59] shadow-[1px_0_#e5d9d2]" />)}
        </span>
      </div>
      <div className="grow-319 basis-0 border-y border-[#a9a295] bg-linear-to-b from-[#d8d0c1] to-[#fff7ea] to-60%" />
      <button type="button" aria-label="Scroll by step" className={arrowBtn + " w-8"}>
        <Arrow dir="left" />
        <i className="h-2 w-px shrink-0 bg-black" />
        <Arrow dir="right" />
      </button>
    </div>
  );
}

/* ---------- status bar ---------- */

function StatusBar() {
  const box = "flex h-[30px] items-center border-t border-l border-[#a39d91] border-r border-r-[#f7efe1]";
  return (
    <footer className="mt-1 flex h-[30px] gap-[2px] text-[17px] leading-6">
      <span className={box + " w-[226px] border-l-0 whitespace-nowrap"}>Time: 007-01-00-00 (24.000s)</span>
      <span className={box + " w-[34px] justify-center"}>B3</span>
      <span className={box + " w-[31px] pl-[3px] font-['Liberation_Serif'] text-[24px]"}>T</span>
      <span className="my-[2px] flex flex-1 items-center border border-[#a39d91] border-r-[#f7efe1] border-b-[#f7efe1] pl-[21px]">Ready.</span>
      <span className={box + " w-[152px] pl-[11px]"}>2 events selected</span>
      <span className="flex h-[30px] w-[102px] items-center justify-center border-t-2 border-r border-b border-l-2 border-[#a39d91] border-r-[#f7efe1] border-b-[#f7efe1] font-bold">0%</span>
    </footer>
  );
}

/* ---------- dialog ---------- */

function TitleBtn({ label, children }: { label: string } & Kids) {
  return (
    <button type="button" aria-label={label} className="flex h-[14px] w-[23px] items-center justify-center rounded-[2px] border border-[#c3bfba]">
      <svg width="10" height="10" viewBox="0 0 10 10" fill="none" stroke="#444" strokeWidth="2" aria-hidden="true">{children}</svg>
    </button>
  );
}

function TextDialog() {
  return (
    <div
      role="dialog"
      aria-label="Text - 'Rosegarden'"
      className="absolute top-[255px] left-[476px] w-[312px] rounded-[4px] border border-[#77736b] bg-[#efedea] px-1 pb-1 shadow-[1px_1px_1px_#8e8a82]"
    >
      <div className="flex h-[22px] items-center gap-[2px] rounded-t-[3px] pl-[2px]">
        <svg width="12" height="14" viewBox="0 0 12 14" aria-hidden="true" className="mr-[1px]">
          <path d="M.5 .5H9L11.500 3V13.500H.5Z" fill="#e3e6e3" stroke="#b9bcb9" />
          <path d="M2 5H9M2 8H9M2 11H8" stroke="#cfd2cf" />
        </svg>
        <TitleBtn label="Sticky"><circle cx="5" cy="5" r="3" /></TitleBtn>
        <h1 className="flex-1 text-center font-['Liberation_Serif'] text-[14px] leading-5 font-bold">Text - 'Rosegarden'</h1>
        <TitleBtn label="Shade"><path d="M5 9V3M1.500 5.500L5 2L8.500 5.500" /></TitleBtn>
        <TitleBtn label="Maximize"><path d="M1.500 1.500H8.500V8.500H1.500Z" strokeWidth="1.200" /><path d="M1 2H9" /></TitleBtn>
        <TitleBtn label="Close"><path d="M1.500 1.500L8.500 8.500M8.500 1.500L1.500 8.500" /></TitleBtn>
      </div>
      <div className="flex flex-col bg-[#e8e2d7] px-[11px] pt-3 pb-3">
        <fieldset className="h-[118px] border border-[#a39d91] px-[10px]">
          <legend className="-ml-[4px] px-[3px] text-[17px] leading-[19px]">Specification</legend>
          <div className="grid grid-cols-[56px_1fr] items-center gap-y-px pt-[5px]">
            <label htmlFor="chord-text" className="pl-px text-[17px] leading-6">Text:</label>
            <span className="relative block">
              <input
                id="chord-text"
                defaultValue="cis:7"
                className="block h-[25px] w-full border border-t-[#8f897e] border-r-[#ddd5c8] border-b-[#ddd5c8] border-l-[#8f897e] bg-white pt-px pl-[2px] text-[17px] outline-none"
              />
              <i className="absolute top-1 left-[39px] h-[19px] w-px bg-black" />
            </span>
            <label htmlFor="chord-style" className="pl-px text-[17px] leading-6">Style:</label>
            <Combo id="chord-style" value="Chord" width="w-full" options={["Chord"]} />
          </div>
        </fieldset>
        <fieldset className="mt-2 h-[141px] border border-[#a39d91] px-[10px]">
          <legend className="-ml-[4px] px-[3px] text-[17px] leading-[19px]">Preview</legend>
          <p className="pt-[9px] pl-[2px] font-['Liberation_Serif'] text-[28px] leading-[28px] font-bold">cis:7</p>
          <svg width="200" height="58" className="mt-1 block" shapeRendering="crispEdges" aria-hidden="true">
            {[0, 14, 28, 42, 56].map((y) => <rect key={y} y={y} width="200" height="1" />)}
          </svg>
        </fieldset>
        <div className="mt-[7px] flex items-center">
          <PushButton width="w-[79px]"><U>H</U>elp</PushButton>
          <span className="mr-[6px] ml-auto flex rounded-[6px] border-2 border-[#3f3f38] border-b-[#fdf6e6] shadow-[0_1px_#fdf6e6]">
            <PushButton width="w-[76px]"><U>O</U>K</PushButton>
          </span>
          <PushButton width="w-[79px]"><U>C</U>ancel</PushButton>
        </div>
      </div>
    </div>
  );
}

export default function App() {
  return (
    <div className="relative flex min-h-screen flex-col overflow-hidden bg-[#e8e2d7] font-['Liberation_Sans',Arial,sans-serif] text-black">
      <MenuBar />
      <MainToolbar />
      <NoteToolbar />
      <main className="flex flex-1">
        <LeftTools />
        <div className="flex min-w-0 flex-1 flex-col">
          <div className="flex">
            <div className="flex w-[135px] shrink-0 items-end justify-end pr-1 pb-1">
              <button type="button" aria-label="Close ruler" className="flex h-[18px] w-[22px] items-center justify-center border border-[#a39d91] bg-linear-to-b from-[#f3ecdf] to-[#dcd4c5]">
                <svg width="11" height="11" viewBox="0 0 11 11" aria-hidden="true"><path d="M.5 .5L10.500 10.500M10.500 .5L.5 10.500" stroke="#000" strokeWidth="1.200" /></svg>
              </button>
            </div>
            <TopRuler />
          </div>
          <div className="flex flex-1 flex-col border-l-2 border-[#a39d91]">
            <div className="flex flex-1 border-t-2 border-[#a39d91]">
              <div className="flex min-w-0 flex-1 flex-col">
                <div className="flex flex-1 shadow-[inset_0_-1px_#f7efe1]">
                  <StaffHeader />
                  <Score />
                </div>
                <div className="flex flex-col pl-[133px]">
                  <div className="flex"><BottomRuler /></div>
                  <div className="flex"><Velocity /></div>
                  <div className="mt-[5px] ml-[2px] flex h-[33px] border-t border-[#a39d91]">
                    <button type="button" className="-mt-px h-8 w-[87px] rounded-b-[5px] border border-t-[#f7efe1] border-r-[#6e6a60] border-b-[#55524a] border-l-[#8f897c] bg-linear-to-b from-[#fffaee] to-[#ddd5c5] text-[17px] leading-6 shadow-[inset_3px_0_3px_-1px_#bfb7a7,inset_-3px_0_3px_-1px_#bfb7a7]">
                      ve<U>l</U>ocity
                    </button>
                  </div>
                </div>
              </div>
              <VScroll />
            </div>
            <HScroll />
          </div>
        </div>
        <RightTools />
      </main>
      <StatusBar />
      <TextDialog />
    </div>
  );
}
